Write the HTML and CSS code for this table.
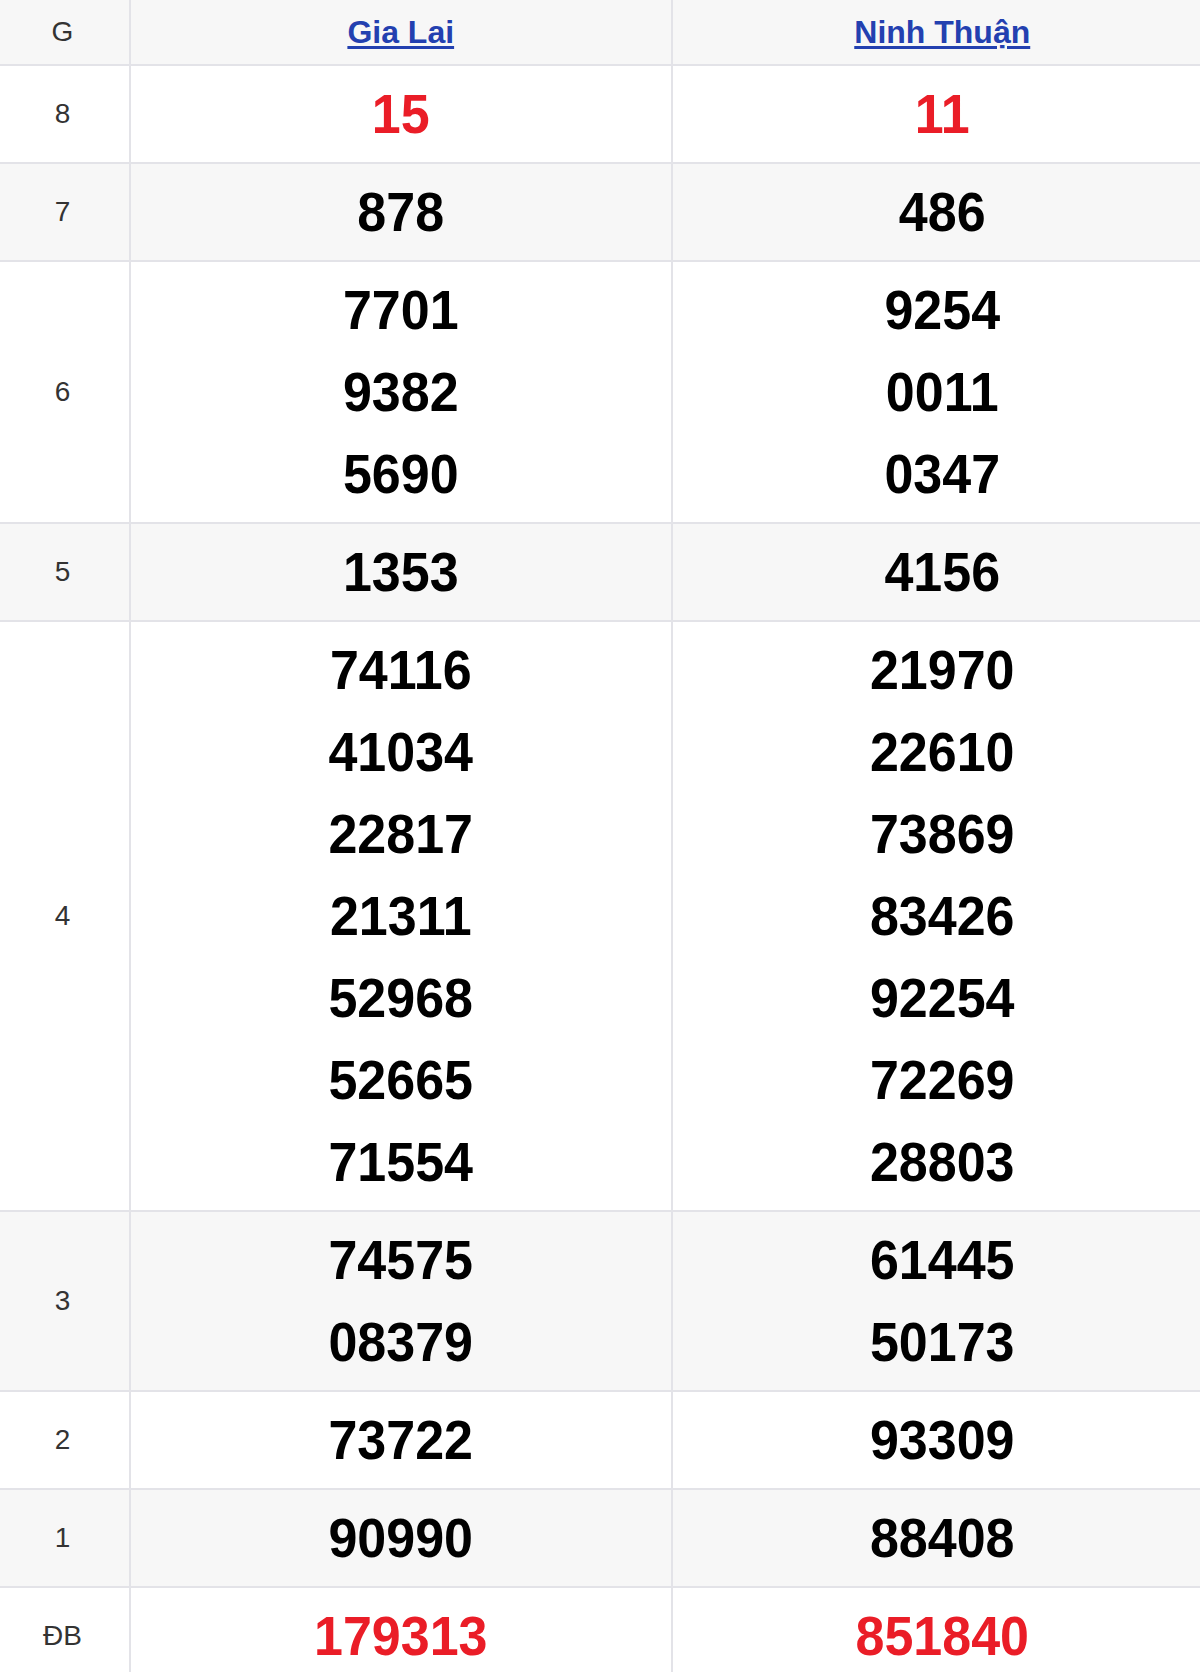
FILE: index.html
```html
<!DOCTYPE html>
<html lang="vi">
<head>
<meta charset="utf-8">
<title>Kết quả xổ số</title>
<link rel="stylesheet" href="styles.css">
</head>
<body>
<table class="kq">
  <colgroup>
    <col class="c-g">
    <col class="c-p">
    <col class="c-p">
  </colgroup>
  <thead>
    <tr class="alt head">
      <th class="lbl">G</th>
      <th><a class="prov" href="#">Gia Lai</a></th>
      <th><a class="prov" href="#">Ninh Thuận</a></th>
    </tr>
  </thead>
  <tbody>
    <tr>
      <td class="lbl">8</td>
      <td><div class="n red">15</div></td>
      <td><div class="n red">11</div></td>
    </tr>
    <tr class="alt">
      <td class="lbl">7</td>
      <td><div class="n">878</div></td>
      <td><div class="n">486</div></td>
    </tr>
    <tr>
      <td class="lbl">6</td>
      <td><div class="n">7701</div><div class="n">9382</div><div class="n">5690</div></td>
      <td><div class="n">9254</div><div class="n">0011</div><div class="n">0347</div></td>
    </tr>
    <tr class="alt">
      <td class="lbl">5</td>
      <td><div class="n">1353</div></td>
      <td><div class="n">4156</div></td>
    </tr>
    <tr>
      <td class="lbl">4</td>
      <td><div class="n">74116</div><div class="n">41034</div><div class="n">22817</div><div class="n">21311</div><div class="n">52968</div><div class="n">52665</div><div class="n">71554</div></td>
      <td><div class="n">21970</div><div class="n">22610</div><div class="n">73869</div><div class="n">83426</div><div class="n">92254</div><div class="n">72269</div><div class="n">28803</div></td>
    </tr>
    <tr class="alt">
      <td class="lbl">3</td>
      <td><div class="n">74575</div><div class="n">08379</div></td>
      <td><div class="n">61445</div><div class="n">50173</div></td>
    </tr>
    <tr>
      <td class="lbl">2</td>
      <td><div class="n">73722</div></td>
      <td><div class="n">93309</div></td>
    </tr>
    <tr class="alt">
      <td class="lbl">1</td>
      <td><div class="n">90990</div></td>
      <td><div class="n">88408</div></td>
    </tr>
    <tr>
      <td class="lbl">ĐB</td>
      <td><div class="n red">179313</div></td>
      <td><div class="n red">851840</div></td>
    </tr>
  </tbody>
</table>
</body>
</html>
```

FILE: styles.css
```css
html, body {
  margin: 0;
  padding: 0;
  overflow: hidden;
  background: #ffffff;
}

body {
  font-family: "Liberation Sans", Arial, sans-serif;
  color: #000000;
}

.kq {
  width: 1214px;
  border-collapse: collapse;
  table-layout: fixed;
}

.c-g {
  width: 130px;
}

.kq th,
.kq td {
  border-right: 2px solid #e3e3e8;
  border-bottom: 2px solid #e3e3e8;
  text-align: center;
  vertical-align: middle;
  padding: 7px 0;
}

.kq tr.alt {
  background: #f7f7f7;
}

.head th {
  height: 50px;
  padding: 7px 0 7px;
  font-weight: normal;
}

.lbl {
  font-size: 28px;
  color: #333333;
  padding-right: 4px;
}

.kq .lbl {
  padding-right: 4px;
}

.prov {
  font-size: 32px;
  font-weight: bold;
  color: #2340b0;
  text-decoration: underline;
  text-underline-offset: 3px;
}

.n {
  font-size: 52px;
  font-weight: bold;
  line-height: 82px;
  height: 82px;
  transform: scaleY(1.08);
}

.n.red {
  color: #ea1d27;
}
```
